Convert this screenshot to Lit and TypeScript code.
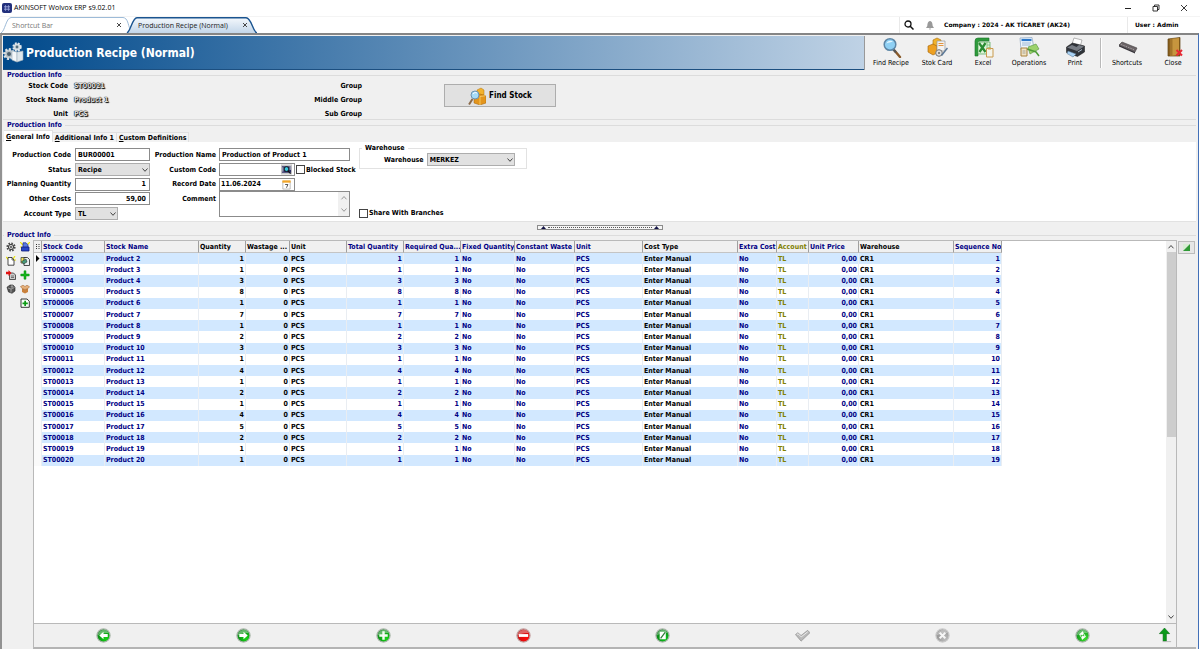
import { LitElement, html, svg, css } from "lit";
import { customElement, state } from "lit/decorators.js";

interface Column {
  title: string;
  width: number;
  tone: "navy" | "black" | "olive";
  right?: boolean;
  value: (r: Row) => string | number;
}

interface Row {
  seq: number;
  code: string;
  name: string;
  qty: number;
}

const quantities = [1, 1, 3, 8, 1, 7, 1, 2, 3, 1, 4, 1, 2, 1, 4, 5, 2, 1, 1];
const rows: Row[] = quantities.map((qty, i) => ({
  seq: i + 1,
  code: "ST" + String(i + 2).padStart(5, "0"),
  name: "Product " + (i + 2),
  qty,
}));

const columns: Column[] = [
  { title: "Stock Code", width: 63, tone: "navy", value: (r) => r.code },
  { title: "Stock Name", width: 94, tone: "navy", value: (r) => r.name },
  { title: "Quantity", width: 47, tone: "black", right: true, value: (r) => r.qty },
  { title: "Wastage ...", width: 44, tone: "black", right: true, value: () => 0 },
  { title: "Unit", width: 57, tone: "black", value: () => "PCS" },
  { title: "Total Quantity", width: 57, tone: "navy", right: true, value: (r) => r.qty },
  { title: "Required Qua...", width: 57, tone: "navy", right: true, value: (r) => r.qty },
  { title: "Fixed Quantity", width: 54, tone: "navy", value: () => "No" },
  { title: "Constant Waste", width: 60, tone: "navy", value: () => "No" },
  { title: "Unit", width: 68, tone: "navy", value: () => "PCS" },
  { title: "Cost Type", width: 95, tone: "black", value: () => "Enter Manual" },
  { title: "Extra Cost", width: 39, tone: "navy", value: () => "No" },
  { title: "Account", width: 32, tone: "olive", value: () => "TL" },
  { title: "Unit Price", width: 50, tone: "navy", right: true, value: () => "0,00" },
  { title: "Warehouse", width: 95, tone: "black", value: () => "CR1" },
  { title: "Sequence No", width: 48, tone: "navy", right: true, value: (r) => r.seq },
];

const chevron = (dir: "up" | "down") => html`<svg class="chev" viewBox="0 0 8 6" aria-hidden="true">
  <path d=${dir === "down" ? "M1.5 1.5 L4 4.3 L6.5 1.5" : "M1.5 4.3 L4 1.5 L6.5 4.3"} fill="none" stroke="currentColor" />
</svg>`;

const gear = svg`
  <circle cx="5" cy="5" r="3.6" fill="none" stroke="#4c4c4c" stroke-width="2" stroke-dasharray="1.6 1.2" />
  <circle cx="5" cy="5" r="2.6" fill="#cfcfcf" stroke="#3c3c3c" stroke-width="1" />
  <circle cx="5" cy="5" r="0.9" fill="#444" />`;

const strip = [
  { label: "Settings", art: gear },
  { label: "Save layout", art: svg`<path d="M0 0l3 3M10 0L7 3M0 5h2" stroke="#f0e800" stroke-width="1.200"/><path d="M3 .8h3l2 2v3H3z" fill="#5b7be0" stroke="#1b2a96" stroke-width=".7"/><path d="M1.500 5h7.500v4H1.500z" fill="#2947c8" stroke="#101c7c" stroke-width=".8"/>` },
  { label: "New", art: svg`<path d="M0 1l3 3M9 0L7 3M10 4H8" stroke="#efe800" stroke-width="1.200"/><path d="M2 1.500h4L8 4v5.200H2z" fill="#fff" stroke="#222" stroke-width=".8"/><path d="M6 1.500V4h2" fill="none" stroke="#222" stroke-width=".6"/>` },
  { label: "Copy", art: svg`<path d="M1 1.500h5V7H1z" fill="#f3e65a" stroke="#333" stroke-width=".7"/><path d="M4 1.500h3.500L9.500 3.500v6H4z" fill="#e8eef0" stroke="#222" stroke-width=".8"/><path d="M1.500 5.500L6 3l1 3-3.500 2z" fill="#469a7a" stroke="#222" stroke-width=".5"/>` },
  { label: "Import", art: svg`<path d="M3.500 3h4L9.500 5v4.500h-6z" fill="#ccc" stroke="#333" stroke-width=".8"/><path d="M5 6h3M5 7.500h3" stroke="#333" stroke-width=".6"/><path d="M0 1.800h2.500V0L5.500 3 2.500 6V4.200H0z" fill="#e01010"/>` },
  { label: "Add", art: svg`<path d="M4 .8h2v3.200h3.200v2H6v3.200H4V6H.8V4H4z" fill="#13b11a" stroke="#0a960f" stroke-width=".5"/>` },
  { label: "Box", art: svg`<path d="M1 3.200L4 1h3l2 2.200V7L6 9.300 2.500 8z" fill="#555" stroke="#222" stroke-width=".6"/><path d="M2 4l3 1v3.500M5 5l3.500-1.500" fill="none" stroke="#bbb" stroke-width=".7"/><circle cx="6" cy="2.500" r="1.300" fill="#999"/>` },
  { label: "Package", art: svg`<path d="M2 4.500l3 1 3-1V8L5 9.500 2 8z" fill="#c9813d"/><path d="M0.500 2.500L3 1.200l2 1.300 2-1.300 2.500 1.500L8 4.600 5 5.500 2 4.500z" fill="#e5b07a" stroke="#9a5a24" stroke-width=".5"/>` },
  null,
  { label: "Insert", art: svg`<path d="M1 1h6l2.300 2.200V9.300H1z" fill="#f8fff8" stroke="#222" stroke-width=".9"/><path d="M4.300 2.700h1.700v1.700h1.800v1.800H6v1.800H4.300V6.200H2.500V4.400h1.800z" fill="#0c9b14"/>` },
];

const tools = [
  { label: "Find Recipe", art: svg`<path d="M13.500 13.500l5.500 6.500" stroke="#8a5a2a" stroke-width="2.400" stroke-linecap="round"/><path d="M12 12l3 3.500" stroke="#555" stroke-width="2"/><circle cx="9" cy="7.500" r="5.800" fill="#8fd0f4" stroke="#5d86a6" stroke-width="1.500"/><path d="M5.500 6.500c1-3 4.500-3.500 6.500-1.500-2 0-4.500.5-6.500 1.500z" fill="#e3f6ff"/>` },
  { label: "Stok Card", art: svg`<path d="M6 3l4-2 4 2v6H6z" fill="#f1b32c" stroke="#a56d0c" stroke-width=".6"/><path d="M1 9l5-2 4 2v7l-4 2-5-3z" fill="#eda021" stroke="#a0620a" stroke-width=".6"/><path d="M10 4h8v10h-8z" fill="#f2f2f2" stroke="#999" stroke-width=".7"/><path d="M11.500 6.500h5M11.500 8.500h5" stroke="#e08a2c" stroke-width=".9"/><circle cx="12" cy="16" r="3.300" fill="#ddd" stroke="#777"/><circle cx="12" cy="16" r="1" fill="#666"/><path d="M14.500 18.500l6-7.500" stroke="#5a7797" stroke-width="1.500"/>` },
  { label: "Excel", art: svg`<path d="M2 4q0-3 3-3h11v3H7q-2 0-2 2v13H2z" fill="#2e9b3c" stroke="#1b7328" stroke-width=".6"/><path d="M5 5h12v12H5z" fill="#dff3da" stroke="#4ca650" stroke-width=".7"/><path d="M6 6l6.500 9M12.500 6L6.500 15" stroke="#2a8c32" stroke-width="2.300"/><path d="M14 5v10M14 8h3M14 11h3" stroke="#6cba6a" stroke-width=".7"/><path d="M13.500 11.500H20V20h-6.500z" fill="#f4f4ec" stroke="#c99a4c" stroke-width="1"/><path d="M15 10.500h3v2h-3z" fill="#cfa050"/>` },
  { label: "Operations", art: svg`<path d="M1 1l12-.5 2 11-13 1.500z" fill="#eef5fc" stroke="#89a4c0" stroke-width=".7"/><path d="M2.500 3h10" stroke="#2c78ca" stroke-width="2.200"/><path d="M3 6h9M3 8h8" stroke="#90b2d0" stroke-width=".9"/><path d="M9 10l8-3 3 5-9 5z" fill="#9cd26c" stroke="#54943a" stroke-width=".6"/><path d="M8 12l9 3 3 4" stroke="#4e9c38" stroke-width="1.500" fill="none"/><path d="M2 11h6v8H2z" fill="#f0e3c4" stroke="#a9813c" stroke-width="1"/><path d="M3.500 14h3M3.500 16h3" stroke="#888" stroke-width=".7"/>` },
  { label: "Print", art: svg`<path d="M9 1l8 2-2 7-8-3z" fill="#fff" stroke="#888" stroke-width=".6"/><path d="M1.500 10l6-4 12 3v6l-7 4.500-11-4z" fill="#30343a" stroke="#111" stroke-width=".5"/><path d="M2 10.500l10 3.500 7-4.500-5-1.500-2.500 2-4.500-2z" fill="#777c84"/><path d="M3 14l8 3-3 3-6-3.500z" fill="#a9d2f4" stroke="#53728e" stroke-width=".5"/><path d="M13 15l4-2.500" stroke="#bcd" stroke-width=".9"/>` },
  null,
  { label: "Shortcuts", art: svg`<path d="M2 8l3-3 15 6-2 4z" fill="#6b6467" stroke="#443f42" stroke-width=".6"/><path d="M4 7.500l14 5.500" stroke="#a49ea0" stroke-width="1" stroke-dasharray="1.500 1"/><path d="M2 8l16 7v1.500L2 9.500z" fill="#37343a"/>` },
  { label: "Close", art: svg`<path d="M5 2l12-1.500V19H5z" fill="#8a6220" stroke="#5f4010" stroke-width=".7"/><path d="M7 2l9-1v17l-9 1z" fill="#c6953e"/><path d="M7 2h2.500v17H7z" fill="#a3742a"/><path d="M13.500 13l5.500 5.500M19 13l-5.500 5.500" stroke="#e82834" stroke-width="2"/>` },
];

const disc = (id: string, light: string, dark: string, ring: string, art: unknown) => svg`
  <defs><radialGradient id=${id} cx=".7" cy=".75" r=".8"><stop offset="0" stop-color=${light}/><stop offset="1" stop-color=${dark}/></radialGradient></defs>
  <circle cx="8" cy="8" r="7" fill=${`url(#${id})`} stroke=${ring} stroke-width="1.300"/>
  <path d="M2 8a6 6 0 0 1 11.500-2.500C9 5 5 6 2 8z" fill="#fff" opacity=".35"/>${art}`;

const recordActions = [
  { label: "Previous", art: disc("g1", "#14d414", "#0d7d1a", "#a9b5a9", svg`<path d="M3.500 8L8 4v2.500h4.500v3H8V12z" fill="#fff"/>`) },
  { label: "Next", art: disc("g2", "#14d414", "#0d7d1a", "#a9b5a9", svg`<path d="M12.500 8L8 4v2.500H3.500v3H8V12z" fill="#fff"/>`) },
  { label: "Insert record", art: disc("g3", "#14d414", "#0d7d1a", "#a9b5a9", svg`<path d="M6.700 3.500h2.600v3.200h3.200v2.600H9.300v3.200H6.700V9.300H3.500V6.700h3.200z" fill="#f4fbf4"/>`) },
  { label: "Delete record", art: disc("g4", "#ff0a0a", "#b81414", "#c2a0a0", svg`<path d="M3 6.500h10v3H3z" fill="#fff"/>`) },
  { label: "Edit record", art: disc("g5", "#0cc41a", "#0c7a1a", "#a9b5a9", svg`<path d="M5 4h6.500v8H5z" fill="#fff"/><path d="M6 11L11 4.500" stroke="#2e7d38" stroke-width="1.300"/>`) },
  { label: "Post", art: svg`<path d="M0.500 7l2.500-2 3.500 3 7-5.500L16 5l-9.500 9z" fill="#b9b9b9" stroke="#8c8c8c" stroke-width=".7"/><path d="M2 7l1.300-.800L6.600 9.500l7-5.500" fill="none" stroke="#ececec"/>` },
  { label: "Cancel", art: disc("g6", "#bdbdbd", "#8e8e8e", "#c9c9c9", svg`<path d="M5 5l6 6M11 5l-6 6" stroke="#f6f6f6" stroke-width="2.200"/>`) },
  { label: "Refresh", art: disc("g7", "#3ade2c", "#0d8a1c", "#a9b5a9", svg`<path d="M8.500 3.500l-4 3.500 4 .5V6c2 .5 2.500 2 2 4M7.500 12.500l4-3.500-4-.5V10c-2-.5-2.500-2-2-3" fill="#fff" stroke="#fff" stroke-width=".5"/>`) },
];

@customElement("app-root")
export class AppRoot extends LitElement {
  @state() private selected = 0;

  static styles = css`
    :host {
      display: flex;
      flex-direction: column;
      height: 100vh;
      overflow: hidden;
      box-sizing: border-box;
      padding-bottom: 4px;
      background: #fff;
      color: #000;
      font: bold 7px/10px "DejaVu Sans Condensed", "DejaVu Sans", sans-serif;
    }
    * { box-sizing: border-box; }
    button, input, select, textarea {
      font: inherit;
      color: inherit;
      margin: 0;
      padding: 0;
      border: 0;
      border-radius: 0;
      background: none;
      outline: none;
      min-width: 0;
    }
    svg { display: block; flex: none; }
    .navy { color: #000084; }
    .black { color: #000; }
    .olive { color: #808000; }

    .titlebar {
      display: flex;
      align-items: center;
      height: 16px;
      padding-left: 2px;
      gap: 2px;
      font: 7px/16px "Open Sans", sans-serif;
    }
    .logo { width: 10px; height: 10px; }
    .winbtns { display: flex; gap: 18px; margin-left: auto; padding-right: 11px; }
    .winbtns svg { width: 10px; height: 10px; }

    .tabbar { display: flex; height: 17px; font: 7px/17px "Open Sans", sans-serif; border-top: 1px solid #f4f4f4; }
    .doctab { display: grid; width: 131px; height: 16px; color: #777; }
    .doctab > * { grid-area: 1 / 1; }
    .doctab svg.shape { width: 100%; height: 16px; }
    .doctab.active { color: #222; margin-left: -5px; }
    .caption { display: flex; align-items: center; justify-content: space-between; padding: 0 9px 0 12px; height: 16px; }
    .caption svg { width: 6px; height: 6px; }
    .status { display: flex; margin-left: auto; border-left: 1px solid #e9e9e9; align-items: center; font: bold 6px/16px "DejaVu Sans", sans-serif; }
    .status .find { width: 10px; height: 10px; margin: 0 12px 0 4px; }
    .status .bell { width: 8px; height: 9px; margin-right: 10px; }
    .company { width: 184px; border-right: 1px solid #e9e9e9; }
    .user { width: 72px; padding-left: 7px; }

    .frame {
      flex: 1;
      min-height: 0;
      display: flex;
      flex-direction: column;
      margin-right: 1px;
      padding: 1px 2px 0 1px;
      border-left: 2px solid #929292;
      border-top: 2px solid #858585;
      border-right: 1px solid #4270b8;
      background: #f0f0f0;
    }
    .banner { display: flex; height: 34px; background: linear-gradient(90deg, #00498b, #bfd2e5 860px); }
    .banner h1 {
      display: flex;
      align-items: center;
      gap: 2px;
      flex: 1;
      margin: 0;
      color: #fff;
      font-size: 12px;
      line-height: 34px;
      border-bottom: 1px solid #1c4f80;
    }
    .banner h1 svg { width: 21px; height: 21px; }
    .tools { display: flex; padding-left: 3px; border-left: 1px solid #999; background: #f0f0f0; font-weight: normal; }
    .tool { display: flex; flex-direction: column; align-items: center; width: 46px; padding-top: 1px; }
    .tool svg { width: 21px; height: 21px; }
    .rule { width: 2px; margin: 2px 2px; background: #b9b9b9; border-right: 1px solid #fff; }

    fieldset { margin: 0; padding: 0; border: 1px solid #dcdcdc; min-width: 0; }
    legend { padding: 0 3px 0 4px; margin: 0; height: 10px; color: #000084; }
    .stock { display: flex; border-width: 1px 0; height: 50px; }
    .facts { display: grid; grid-template-columns: 65px 160px 134px; grid-auto-rows: 12px; row-gap: 2px; column-gap: 0; line-height: 12px; margin: 0; }
    .facts dt { text-align: right; }
    .facts dd { margin: 0; padding-left: 6px; color: #ddd; text-shadow: 0 0 1px #000, 0 0 1px #000, 1px 1px 1px #000; }
    .facts dt:nth-of-type(even) { grid-column: 3; }
    .stockbody { display: flex; align-items: flex-start; }
    .findstock {
      display: flex;
      align-items: center;
      justify-content: center;
      gap: 3px;
      width: 112px;
      height: 23px;
      margin: 4px 0 0 82px;
      background: #e1e1e1;
      border: 1px solid #adadad;
      font-size: 8px;
    }
    .findstock svg { width: 18px; height: 18px; }

    .production { border-width: 1px 0 0; }
    .tabs { display: flex; align-items: flex-end; height: 12px; padding-left: 1px; }
    .tabs button { height: 10px; padding: 0 2px; background: #f3f3f3; border: 1px solid #e0e0e0; border-width: 1px 1px 0 0; line-height: 10px; white-space: nowrap; }
    .tabs button.on { height: 12px; background: #fff; }
    u { text-decoration-thickness: 1px; text-underline-offset: 1px; }
    .panel { display: flex; height: 80px; padding-top: 5px; background: #fff; border-bottom: 1px solid #e2e2e2; white-space: nowrap; }
    .form { display: grid; grid-template-rows: 15px 15px 14px 15px 15px; align-items: center; }
    .left { grid-template-columns: 68px 75px; column-gap: 4px; }
    .mid { grid-template-columns: 66px 131px; column-gap: 3px; }
    .form > label { text-align: right; }
    .field { height: 13px; padding: 0 2px; border: 1px solid #8b8b8b; background: #fff; width: 100%; }
    .num { text-align: right; padding-right: 3px; }
    .pick { display: grid; align-items: center; width: 100%; }
    .pick > * { grid-area: 1 / 1; }
    .pick select { appearance: none; width: 100%; height: 13px; padding: 0 2px; background: #e1e1e1; border: 1px solid #adadad; }
    .pick svg { justify-self: end; margin-right: 1px; pointer-events: none; }
    .pick.small { width: 43px; }
    .chev { width: 8px; height: 6px; color: #444; }
    .line { display: flex; align-items: center; gap: 1px; }
    .combo { display: flex; align-items: center; flex: none; width: 76px; height: 13px; padding-right: 2px; border: 1px solid #8b8b8b; background: #fff; }
    .combo input { flex: 1; padding-left: 1px; }
    .combo svg { width: 11px; height: 11px; }
    .line label { display: flex; align-items: center; gap: 1px; }
    input[type="checkbox"] { appearance: none; flex: none; width: 9px; height: 9px; border: 1px solid #444; background: #fff; }
    .memo { grid-column: 2; grid-row: 4 / 6; align-self: start; display: flex; height: 26px; border: 1px solid #8b8b8b; }
    .memo textarea { flex: 1; resize: none; overflow: hidden; }
    .memo .bar { display: flex; flex-direction: column; justify-content: space-between; align-items: center; width: 11px; padding: 3px 1px; background: #f0f0f0; }
    .memo .chev { color: #999; }
    .side { display: flex; flex-direction: column; justify-content: space-between; margin-left: 9px; padding-bottom: 3px; }
    .ware { width: 168px; height: 26px; margin-top: -4px; border-color: #e2e2e2; }
    .ware legend { margin-left: 2px; padding-left: 3px; color: #000; }
    .ware .line { gap: 3px; padding-left: 24px; }
    .ware .pick { width: 88px; }

    .splitter { display: flex; align-items: center; justify-content: space-between; align-self: center; width: 126px; height: 5px; margin: 3px 0 0; border: 1px solid #8c8c8c; background: #f6f6f6; padding: 0 3px; }
    .splitter i { flex: 1; margin: 0 2px; border-top: 1px dotted #555; }
    .splitter svg { width: 5px; height: 3px; }

    .product { flex: 1; min-height: 0; display: grid; grid-template-rows: 10px 1fr; }
    .heading { display: flex; align-items: center; color: #000084; margin: 0; font-size: 7px; gap: 3px; }
    .heading::before, .heading::after { content: ""; height: 1px; background: #dcdcdc; width: 1px; }
    .heading::after { flex: 1; }
    .work { display: flex; min-height: 0; }
    .strip { display: grid; grid-template-columns: 14px 14px; grid-auto-rows: 14px; align-content: start; justify-items: center; align-items: center; width: 30px; padding-left: 1px; }
    .strip svg { width: 10px; height: 10px; }
    .gridbox { flex: 1; min-width: 0; display: flex; flex-direction: column; border: 1px solid #b9b9b9; border-bottom: 2px solid #b4b4b4; }
    .view { flex: 1; min-height: 0; display: flex; background: #fff; }
    .scroll { flex: 1; min-width: 0; overflow: hidden; }
    table { table-layout: fixed; width: 968px; height: 225px; border-collapse: separate; border-spacing: 0; }
    th, td { padding: 0 0 0 1px; height: 11px; line-height: 10px; text-align: left; white-space: nowrap; overflow: hidden; border-right: 1px solid #e9edf2; }
    th { height: 12px; background: #f0f0f0; border-right: 1px solid #a0a0a0; border-bottom: 1px solid #c4c4c4; }
    tbody tr:nth-child(odd) td { background: #d2e8ff; }
    tbody tr td.mark, tbody tr:nth-child(odd) td.mark { background: #fafafa; }
    td.r { text-align: right; padding-right: 1px; }
    .mark svg { width: 5px; height: 7px; }
    .vbar { display: flex; flex-direction: column; width: 10px; background: #f0f0f0; align-items: center; padding: 3px 0; }
    .vbar .thumb { width: 9px; height: 185px; margin: 2px 0 auto; background: #cdcdcd; }
    .nav { display: flex; height: 24px; align-items: center; border-top: 1px solid #b9b9b9; }
    .nav button { flex: 1; display: flex; justify-content: center; }
    .nav svg { width: 15px; height: 15px; }
    .nav button:last-child { flex: 0 0 24px; }
    .rail { width: 19px; padding: 1px 0 0 1px; border-bottom: 2px solid #b4b4b4; }
    .rail button { display: grid; place-items: center; width: 17px; height: 13px; border: 1px solid #bcbcbc; background: #e6e6e6; }
    .rail svg { width: 9px; height: 9px; }
  `;

  private closeGlyph() {
    return html`<svg viewBox="0 0 6 6"><path d="M1 1l4 4M5 1L1 5" stroke="#333" stroke-width=".9" /></svg>`;
  }

  private header() {
    return html`
      <header>
        <div class="titlebar">
          <svg class="logo" viewBox="0 0 10 10"><rect width="10" height="10" rx="2" fill="#23307c" /><path d="M2 3.500h6M2 5h6M2 6.500h6M3.500 2v6M6.500 2v6" stroke="#aab4e6" stroke-width=".6" /></svg>
          <span>AKINSOFT Wolvox ERP s9.02.01</span>
          <div class="winbtns">
            <button aria-label="Minimize"><svg viewBox="0 0 10 10"><path d="M2 5.500h6" stroke="#222" /></svg></button>
            <button aria-label="Restore"><svg viewBox="0 0 10 10"><path d="M2 3.500h4.500V8H2zM3.500 3.500V2H8v4.500H6.500" fill="none" stroke="#222" stroke-width=".9" /></svg></button>
            <button aria-label="Close"><svg viewBox="0 0 10 10"><path d="M2 2l6 6M8 2L2 8" stroke="#222" stroke-width=".9" /></svg></button>
          </div>
        </div>
        <div class="tabbar">
          <button class="doctab">
            <svg class="shape" viewBox="0 0 131 16" preserveAspectRatio="none"><path d="M1 16C5 14 6 1 11 .5H123C128 1 128 8 130 12" fill="#fff" stroke="#9dbbd8" /></svg>
            <span class="caption"><span>Shortcut Bar</span>${this.closeGlyph()}</span>
          </button>
          <button class="doctab active">
            <svg class="shape" viewBox="0 0 131 16" preserveAspectRatio="none">
              <defs><linearGradient id="tabfill" x2="0" y2="1"><stop offset="0" stop-color="#f4f8fc" /><stop offset="1" stop-color="#c3d6e9" /></linearGradient></defs>
              <path d="M1 16C5 14 6 1 11 .7H120C126 1 126 14 131 16" fill="url(#tabfill)" stroke="#1a5490" stroke-width="1.400" />
            </svg>
            <span class="caption"><span>Production Recipe (Normal)</span>${this.closeGlyph()}</span>
          </button>
          <div class="status">
            <svg class="find" viewBox="0 0 10 10"><circle cx="4" cy="4" r="3" fill="none" stroke="#111" stroke-width="1.300" /><path d="M6.200 6.200L9.500 9.500" stroke="#111" stroke-width="1.500" /></svg>
            <svg class="bell" viewBox="0 0 8 9"><path d="M4 0c2.500.5 2.500 3 2.700 5L8 7H0l1.300-2C1.500 3 1.500.5 4 0zM3 7.500h2L4 9z" fill="#999" /></svg>
            <span class="company">Company : 2024 - AK TİCARET (AK24)</span>
            <span class="user">User : Admin</span>
          </div>
        </div>
      </header>
    `;
  }

  private banner() {
    return html`
      <div class="banner">
        <h1>
          <svg viewBox="0 0 21 21">
            <circle cx="14" cy="5" r="3.600" fill="#cfd8de" stroke="#e1e7eb" stroke-width="2.200" stroke-dasharray="1.700 1.200" /><circle cx="14" cy="5" r="1.400" fill="#55707f" />
            <circle cx="6" cy="12" r="4.600" fill="#b4bec5" stroke="#dbe2e6" stroke-width="2.600" stroke-dasharray="2 1.500" /><circle cx="6" cy="12" r="2" fill="#4a5f6d" />
            <path d="M9 9l5 1v10l-5-2z" fill="#f4f7f9" stroke="#9fb0bc" stroke-width=".6" /><path d="M14 10l6-1v9l-6 2z" fill="#dfe7ec" stroke="#9fb0bc" stroke-width=".6" />
          </svg>
          Production Recipe (Normal)
        </h1>
        <div class="tools">
          ${tools.map((t) => t
            ? html`<button class="tool"><svg viewBox="0 0 21 21">${t.art}</svg>${t.label}</button>`
            : html`<span class="rule"></span>`)}
        </div>
      </div>
    `;
  }

  private stockInfo() {
    return html`
      <fieldset class="stock">
        <legend>Production Info</legend>
        <div class="stockbody">
          <dl class="facts">
            <dt>Stock Code</dt><dd>ST00021</dd><dt>Group</dt>
            <dt>Stock Name</dt><dd>Product 1</dd><dt>Middle Group</dt>
            <dt>Unit</dt><dd>PCS</dd><dt>Sub Group</dt>
          </dl>
          <button class="findstock">
            <svg viewBox="0 0 18 18"><path d="M9 3l4-2 3 2v5H9z" fill="#f2b22c" stroke="#b0720c" stroke-width=".5" /><path d="M6 9l6-2 6 2v7l-6 2-6-2z" fill="#e3951c" stroke="#a0620a" stroke-width=".5" /><path d="M12 9.500V18M12 9.500l5.500-.8" stroke="#f9d070" stroke-width=".8" /><path d="M4.500 12L1 17.500" stroke="#8b6a4a" stroke-width="2" /><circle cx="7" cy="8" r="4" fill="#a6dcf8" stroke="#6d93ae" /><path d="M5 7c1-1.500 2.500-1.800 4-1" stroke="#fff" fill="none" /></svg>
            Find Stock
          </button>
        </div>
      </fieldset>
    `;
  }

  private form() {
    return html`
      <fieldset class="production">
        <legend>Production Info</legend>
        <div class="tabs">
          <button class="on"><u>G</u>eneral Info</button>
          <button><u>A</u>dditional Info 1</button>
          <button><u>C</u>ustom Definitions</button>
        </div>
        <div class="panel">
          <div class="form left">
            <label for="pcode">Production Code</label><input id="pcode" class="field" value="BUR00001" />
            <label for="status">Status</label><span class="pick"><select id="status"><option>Recipe</option></select>${chevron("down")}</span>
            <label for="plan">Planning Quantity</label><input id="plan" class="field num" value="1" />
            <label for="costs">Other Costs</label><input id="costs" class="field num" value="59,00" />
            <label for="acc">Account Type</label><span class="pick small"><select id="acc"><option>TL</option></select>${chevron("down")}</span>
          </div>
          <div class="form mid">
            <label for="pname">Production Name</label><input id="pname" class="field" value="Production of Product 1" />
            <label for="ccode">Custom Code</label>
            <span class="line">
              <span class="combo"><input id="ccode" /><svg viewBox="0 0 12 11"><rect width="12" height="11" fill="#c9c9c9" /><path d="M1 2h10v7H1z" fill="#2b2b66" /><circle cx="6" cy="5" r="2.600" fill="#38c8e0" stroke="#111" /><path d="M7.500 7l3 3" stroke="#111" stroke-width="1.300" /><path d="M2 3v5M10 2v4" stroke="#ddd" /></svg></span>
              <label><input type="checkbox" />Blocked Stock</label>
            </span>
            <label for="date">Record Date</label>
            <span class="combo"><input id="date" value="11.06.2024" /><svg viewBox="0 0 12 11"><path d="M2 2h8v8.500H2z" fill="#fff" stroke="#999" stroke-width=".7" /><path d="M1.500 1h9v2.500h-9z" fill="#f2a628" /><path d="M4.500 5.500h3L6 9" fill="none" stroke="#333" stroke-width=".9" /></svg></span>
            <label for="comment">Comment</label>
            <span class="memo"><textarea id="comment"></textarea><span class="bar">${chevron("up")}${chevron("down")}</span></span>
          </div>
          <div class="side">
            <fieldset class="ware">
              <legend>Warehouse</legend>
              <div class="line">
                <label for="wh">Warehouse</label>
                <span class="pick"><select id="wh"><option>MERKEZ</option></select>${chevron("down")}</span>
              </div>
            </fieldset>
            <span class="line"><label><input type="checkbox" />Share With Branches</label></span>
          </div>
        </div>
      </fieldset>
    `;
  }

  private table() {
    return html`
      <table>
        <colgroup>
          <col style="width:8px" />
          ${columns.map((c) => html`<col style="width:${c.width}px" />`)}
        </colgroup>
        <thead>
          <tr>
            <th><svg viewBox="0 0 5 7" width="5" height="7"><path d="M1 1.500h1M3.500 1.500h1M1 3.500h1M3.500 3.500h1M1 5.500h1M3.500 5.500h1" stroke="#333" /></svg></th>
            ${columns.map((c) => html`<th class=${c.tone}>${c.title}</th>`)}
          </tr>
        </thead>
        <tbody>
          ${rows.map((r, i) => html`
            <tr @click=${() => (this.selected = i)}>
              <td class="mark">${i === this.selected ? html`<svg viewBox="0 0 5 7"><path d="M1 0v7l3.500-3.500z" /></svg>` : ""}</td>
              ${columns.map((c) => html`<td class="${c.tone} ${c.right ? "r" : ""}">${c.value(r)}</td>`)}
            </tr>`)}
        </tbody>
      </table>
    `;
  }

  render() {
    return html`
      ${this.header()}
      <main class="frame">
        ${this.banner()} ${this.stockInfo()} ${this.form()}
        <div class="splitter"><svg viewBox="0 0 5 3"><path d="M0 3L2.500 0 5 3z" fill="#114" /></svg><i></i><svg viewBox="0 0 5 3"><path d="M0 3L2.500 0 5 3z" fill="#114" /></svg></div>
        <section class="product">
          <h2 class="heading">Product Info</h2>
          <div class="work">
            <div class="strip">
              ${strip.map((s) => s ? html`<button aria-label=${s.label}><svg viewBox="0 0 10 10">${s.art}</svg></button>` : html`<span></span>`)}
            </div>
            <div class="gridbox">
              <div class="view">
                <div class="scroll">${this.table()}</div>
                <div class="vbar">${chevron("up")}<span class="thumb"></span>${chevron("down")}</div>
              </div>
              <div class="nav">
                ${recordActions.map((n) => html`<button aria-label=${n.label}><svg viewBox="0 0 16 16">${n.art}</svg></button>`)}
                <button aria-label="Top"><svg viewBox="0 0 16 16"><path d="M8 0l5.500 6H10v8H6.500V6h-4z" fill="#0b9a1a" stroke="#066b10" stroke-width=".6" /><path d="M6 14.500h9" stroke="#b5b5b5" /></svg></button>
              </div>
            </div>
            <div class="rail"><button aria-label="Resize"><svg viewBox="0 0 9 9"><path d="M1 1l7 0L1 8z" fill="#d7ecd4" /><path d="M8 1v7H1z" fill="#2f9a35" /></svg></button></div>
          </div>
        </section>
      </main>
    `;
  }
}
